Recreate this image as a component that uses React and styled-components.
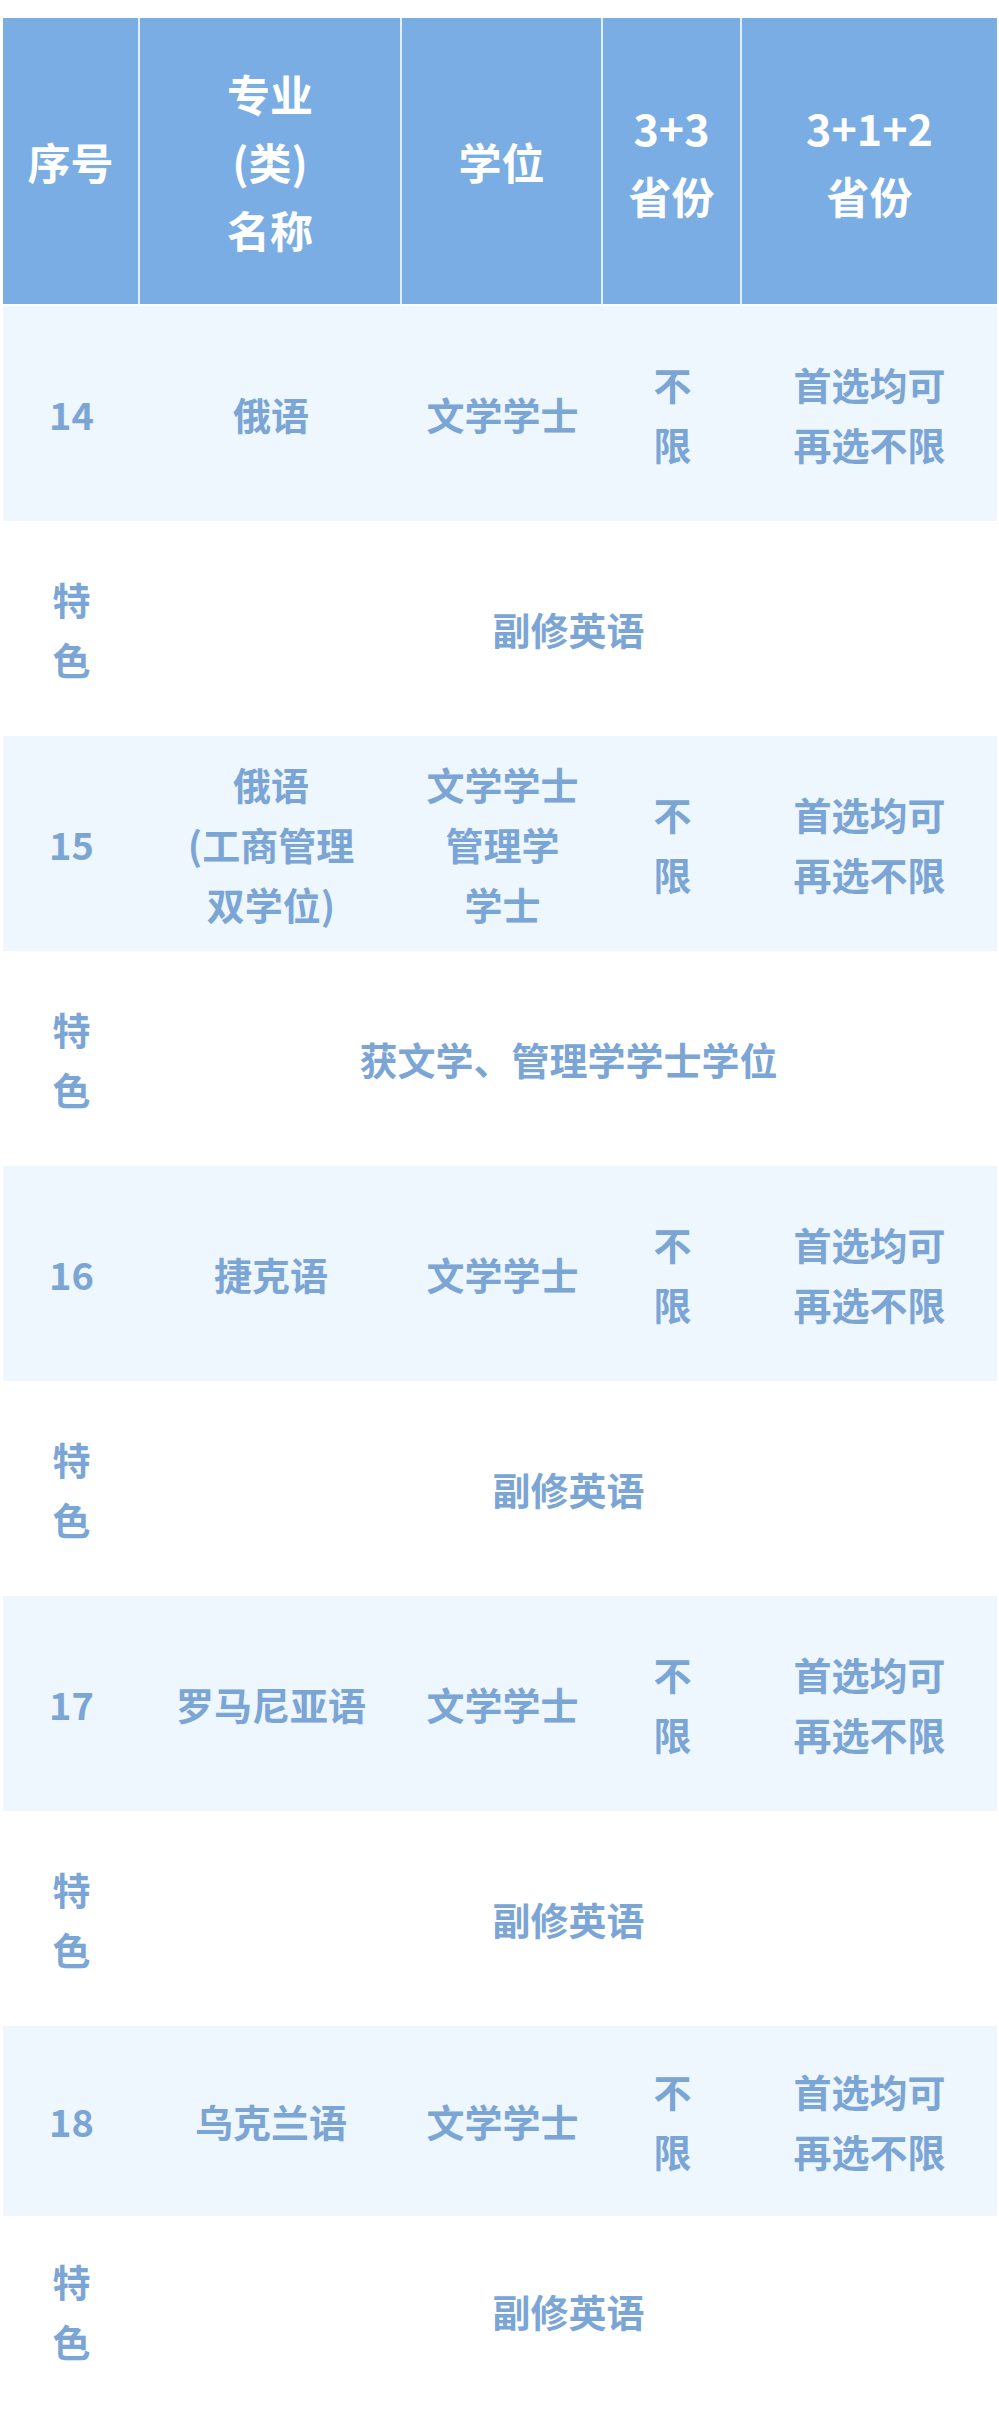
import React from "react";
import styled, { createGlobalStyle } from "styled-components";

const GlobalStyle = createGlobalStyle`
  body {
    margin: 0;
    background: #ffffff;
    font-family: "Noto Sans CJK SC", "Noto Sans", sans-serif;
  }
`;

const columns = [137, 262, 201, 139, 255];

const headers = [
  ["序号"],
  ["专业", "(类)", "名称"],
  ["学位"],
  ["3+3", "省份"],
  ["3+1+2", "省份"],
];

const majors = [
  { no: "14", name: ["俄语"], degree: ["文学学士"], feature: "副修英语" },
  {
    no: "15",
    name: ["俄语", "(工商管理", "双学位)"],
    degree: ["文学学士", "管理学", "学士"],
    feature: "获文学、管理学学士学位",
  },
  { no: "16", name: ["捷克语"], degree: ["文学学士"], feature: "副修英语" },
  { no: "17", name: ["罗马尼亚语"], degree: ["文学学士"], feature: "副修英语" },
  { no: "18", name: ["乌克兰语"], degree: ["文学学士"], feature: "副修英语", height: 190 },
];

const Lines = ({ lines }) =>
  lines.map((l, i) => <Line key={i}>{l}</Line>);

const App = () => {
  return (
    <Page>
      <GlobalStyle />
      <Table>
        <colgroup>
          {columns.map((w, i) => (
            <col key={i} style={{ width: w }} />
          ))}
        </colgroup>
        <thead>
          <HeadRow>
            {headers.map((h, i) => (
              <HeadCell key={i} $last={i === headers.length - 1}>
                <Lines lines={h} />
              </HeadCell>
            ))}
          </HeadRow>
        </thead>
        <tbody>
          {majors.map((m) => (
            <React.Fragment key={m.no}>
              <BodyRow $tone="light" $h={m.height || 215}>
                <Cell>{m.no}</Cell>
                <Cell>
                  <Lines lines={m.name} />
                </Cell>
                <Cell>
                  <Lines lines={m.degree} />
                </Cell>
                <Cell>
                  <Lines lines={["不", "限"]} />
                </Cell>
                <Cell>
                  <Lines lines={["首选均可", "再选不限"]} />
                </Cell>
              </BodyRow>
              <BodyRow $tone="white" $h={m.height || 215}>
                <Cell>
                  <Lines lines={["特", "色"]} />
                </Cell>
                <Cell colSpan={4}>{m.feature}</Cell>
              </BodyRow>
            </React.Fragment>
          ))}
        </tbody>
      </Table>
    </Page>
  );
};

export default App;

const Page = styled.div`
  padding: 18px 2px 0 3px;
  width: 994px;
`;
const Table = styled.table`
  width: 994px;
  table-layout: fixed;
  border-collapse: separate;
  border-spacing: 0;
`;
const HeadRow = styled.tr`
  height: 288px;
`;
const HeadCell = styled.th`
  padding: 0;
  background: #7aade3;
  color: #ffffff;
  font-size: 43px;
  font-weight: 700;
  line-height: 68px;
  text-align: center;
  vertical-align: middle;
  border-right: ${(p) => (p.$last ? "none" : "2px solid #e4eefa")};
  border-bottom: 2px solid #ffffff;
`;
const BodyRow = styled.tr`
  height: ${(p) => p.$h}px;
  background: ${(p) => (p.$tone === "light" ? "#eef6fe" : "#ffffff")};
`;
const Cell = styled.td`
  padding: 0;
  color: #7ba5d4;
  font-size: 38px;
  font-weight: 700;
  line-height: 60px;
  text-align: center;
  vertical-align: middle;
`;
const Line = styled.span`
  display: block;
  white-space: nowrap;
`;
